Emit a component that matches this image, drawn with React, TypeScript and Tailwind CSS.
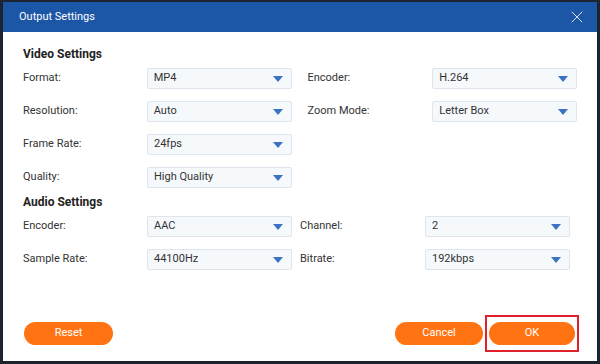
import { X } from "lucide-react";

interface SelectProps {
  value: string;
}

function Select({ value }: SelectProps) {
  return (
    <div className="flex h-[21px] w-[145px] items-center justify-between rounded-[2px] border border-[#dfe5ec] bg-[#f6f9fc] pl-[6px] pr-[8px] text-[11px] text-[#333]">
      <span>{value}</span>
      <svg width="10" height="6" viewBox="0 0 10 6">
        <path d="M0 0 L10 0 L5 6 Z" fill="#3c72c2" />
      </svg>
    </div>
  );
}

interface RowProps {
  label: string;
  value: string;
  right?: { label: string; value: string };
  gap: string;
}

function Row({ label, value, right, gap }: RowProps) {
  return (
    <div className="flex h-[21px] items-center">
      <div className="w-[124px] text-[11px] text-[#333]">{label}</div>
      <Select value={value} />
      {right && (
        <>
          <div className={`${gap} w-[125px] text-[11px] text-[#333]`}>{right.label}</div>
          <Select value={right.value} />
        </>
      )}
    </div>
  );
}

export default function App() {
  return (
    <div
      className="h-[364px] w-[600px] overflow-hidden bg-[#1d2530] px-[3px] pt-[2px]"
      style={{ fontFamily: 'Roboto, "Noto Sans", sans-serif' }}
    >
      <div className="flex h-[359px] w-[594px] flex-col bg-white shadow-[0_1px_2px_rgba(0,0,0,0.15)]">
        <div className="flex h-[30px] items-center justify-between bg-[#1c56a7] pl-[16px] pr-[10px]">
          <span className="text-[11px] text-white">Output Settings</span>
          <X className="h-[20px] w-[20px] text-white" strokeWidth={1} />
        </div>

        <div className="flex flex-1 flex-col px-[20px]">
          <div className="mt-[14px] h-[16px] text-[12px] font-bold leading-[16px] text-[#222]">Video Settings</div>
          <div className="mt-[6px] flex flex-col gap-[12px]">
            <Row label="Format:" value="MP4" right={{ label: "Encoder:", value: "H.264" }} gap="ml-[16px]" />
            <Row
              label="Resolution:"
              value="Auto"
              right={{ label: "Zoom Mode:", value: "Letter Box" }}
              gap="ml-[16px]"
            />
            <Row label="Frame Rate:" value="24fps" gap="ml-[16px]" />
            <Row label="Quality:" value="High Quality" gap="ml-[16px]" />
          </div>

          <div className="mt-[6px] h-[16px] text-[12px] font-bold leading-[16px] text-[#222]">Audio Settings</div>
          <div className="mt-[6px] flex flex-col gap-[12px]">
            <Row label="Encoder:" value="AAC" right={{ label: "Channel:", value: "2" }} gap="ml-[8px]" />
            <Row
              label="Sample Rate:"
              value="44100Hz"
              right={{ label: "Bitrate:", value: "192kbps" }}
              gap="ml-[8px]"
            />
          </div>

          <div className="mt-auto mb-[9px] -mr-[2px] flex items-center justify-between pl-[1px]">
            <button type="button" className="h-[23px] w-[89px] rounded-full bg-[#ff7313] text-[11px] text-white">
              Reset
            </button>
            <div className="flex items-center gap-[2px]">
              <button type="button" className="h-[23px] w-[88px] rounded-full bg-[#ff7313] text-[11px] text-white">
                Cancel
              </button>
              <div className="border-2 border-[#e0202c] px-[2px] py-[5px]">
                <button
                  type="button"
                  className="block h-[23px] w-[86px] rounded-full bg-[#ff7313] text-[11px] text-white"
                >
                  OK
                </button>
              </div>
            </div>
          </div>
        </div>
      </div>
    </div>
  );
}
